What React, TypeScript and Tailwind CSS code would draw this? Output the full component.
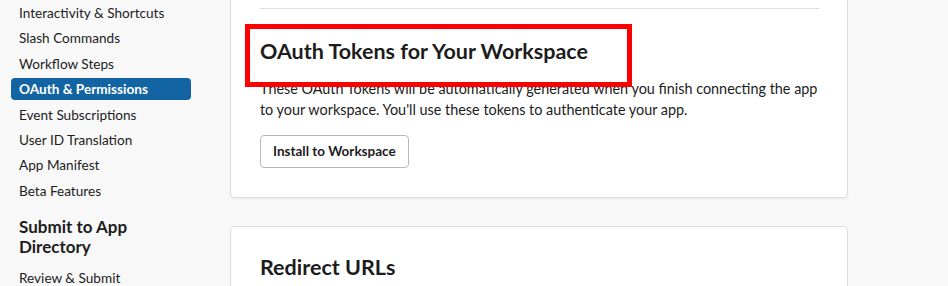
import React from 'react';

const navItems = [
  'Interactivity & Shortcuts',
  'Slash Commands',
  'Workflow Steps',
  'OAuth & Permissions',
  'Event Subscriptions',
  'User ID Translation',
  'App Manifest',
  'Beta Features',
];

const App: React.FC = () => {
  return (
    <div className="w-[948px] h-[286px] overflow-hidden bg-[#f8f8f8] text-[#1d1c1d] font-['Lato','Liberation_Sans',sans-serif] flex">
      {/* Sidebar */}
      <div className="w-[230px] shrink-0 pl-[11px] pt-[2px]">
        <div className="w-[180px] flex flex-col gap-[3.4px]">
          {navItems.map((item) => (
            <div
              key={item}
              className={`h-[22px] leading-[22px] px-2 rounded text-[13.6px] ${item === 'OAuth & Permissions' ? 'bg-[#1264a3] text-white font-bold' : ''}`}
            >
              {item}
            </div>
          ))}
        </div>
        <h3 className="w-[180px] px-2 mt-[15px] text-[17px] leading-[20px] font-bold">Submit to App Directory</h3>
        <div className="w-[180px] mt-[10px] h-[22px] leading-[22px] px-2 text-[13.6px]">Review &amp; Submit</div>
      </div>

      {/* Main */}
      <div className="w-[618px] flex flex-col gap-[28px]">
        <div className="-mt-[40px] bg-white border border-[#dddddd] rounded shadow-[0_1px_2px_rgba(0,0,0,0.06)] px-[29px] pb-[29px]">
          <div className="h-[48px] border-b border-[#dddddd] mr-[-1px]" />
          <div className="relative mt-[27px]">
            <h2 className="text-[21.5px] leading-[30px] font-bold">OAuth Tokens for Your Workspace</h2>
            <div className="absolute -left-[15px] -top-[12px] w-[387px] h-[63px] border-[5px] border-[#ff0000]" />
          </div>
          <p className="mt-[12px] mr-[-4px] text-[14.4px] leading-[21px]">
            These OAuth Tokens will be automatically generated when you finish connecting the app to your workspace. You'll use these tokens to authenticate your app.
          </p>
          <button
            type="button"
            className="mt-[15px] h-[33px] px-[12px] border border-[#b8b8b8] rounded bg-white text-[13.5px] font-bold text-[#1d1c1d]"
          >
            Install to Workspace
          </button>
        </div>

        <div className="bg-white border border-[#dddddd] rounded px-[29px] pt-[25px] pb-[30px]">
          <h2 className="text-[21.5px] leading-[30px] font-bold">Redirect URLs</h2>
        </div>
      </div>
    </div>
  );
};

export default App;
